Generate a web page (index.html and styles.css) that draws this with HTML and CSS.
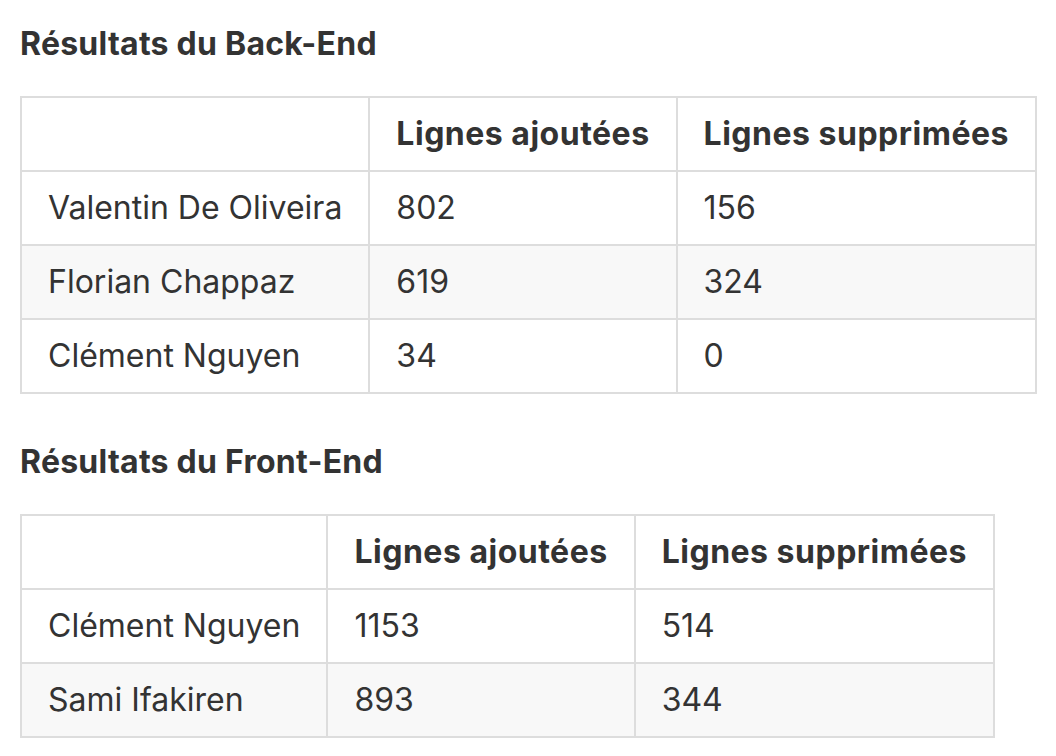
FILE: index.html
```html
<!DOCTYPE html>
<html lang="fr">
<head>
<meta charset="utf-8">
<title>Résultats</title>
<link rel="stylesheet" href="styles.css">
</head>
<body>
<main class="doc">
  <h4 class="title first">Résultats du Back-End</h4>
  <table class="results">
    <thead>
      <tr><th></th><th>Lignes ajoutées</th><th>Lignes supprimées</th></tr>
    </thead>
    <tbody>
      <tr><td>Valentin De Oliveira</td><td>802</td><td>156</td></tr>
      <tr><td>Florian Chappaz</td><td>619</td><td>324</td></tr>
      <tr><td>Clément Nguyen</td><td>34</td><td>0</td></tr>
    </tbody>
  </table>
  <h4 class="title">Résultats du Front-End</h4>
  <table class="results">
    <thead>
      <tr><th></th><th>Lignes ajoutées</th><th>Lignes supprimées</th></tr>
    </thead>
    <tbody>
      <tr><td>Clément Nguyen</td><td>1153</td><td>514</td></tr>
      <tr><td>Sami Ifakiren</td><td>893</td><td>344</td></tr>
    </tbody>
  </table>
</main>
</body>
</html>
```
FILE: styles.css
```css
html, body {
  margin: 0;
  padding: 0;
  background: #ffffff;
}

body {
  font-family: Inter, "Noto Sans", "Liberation Sans", sans-serif;
  font-size: 32px;
  line-height: 1.5;
  color: #333333;
}

.doc {
  padding: 24px 20px 0 20px;
}

.title {
  font-size: 32px;
  font-weight: 700;
  line-height: 40px;
  letter-spacing: 0.25px;
  margin: 48px 0 32px 0;
}

.title.first {
  margin-top: 0;
}

.results {
  border-collapse: collapse;
  border-spacing: 0;
  margin: 0 0 32px 0;
}

.results th,
.results td {
  border: 2px solid #dddddd;
  padding: 12px 26px;
  text-align: left;
  white-space: nowrap;
}

.results th {
  font-weight: 700;
  letter-spacing: 0.5px;
}

.results tbody tr:nth-child(2n) {
  background: #f8f8f8;
}
```
